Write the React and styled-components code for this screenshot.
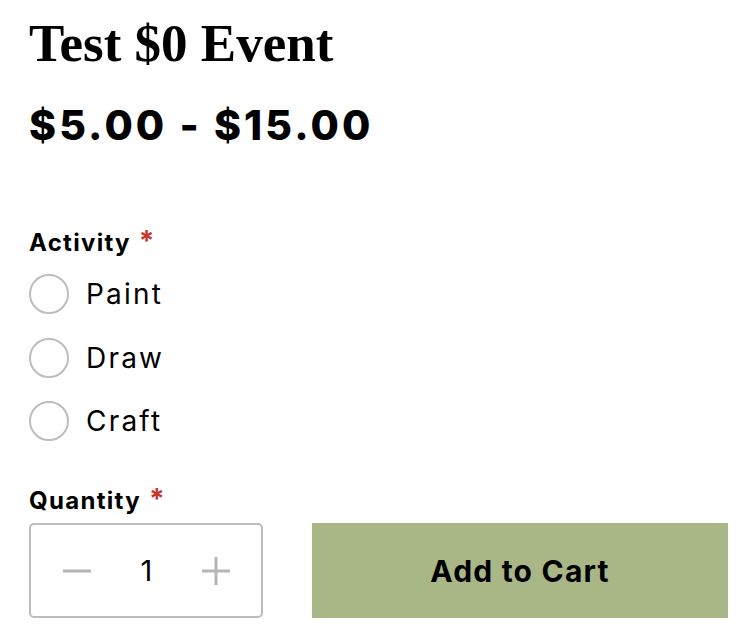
import React, { useState } from 'react'
import styled, { createGlobalStyle } from 'styled-components'

const GlobalStyle = createGlobalStyle`
  body {
    margin: 0;
    background: #ffffff;
    color: #000000;
    font-family: Inter, "Liberation Sans", sans-serif;
  }
`

const Page = styled.div`
  padding: 12px 20px 0 29px;
  width: 748px;
  box-sizing: border-box;
`

const Title = styled.h1`
  margin: 0;
  font-family: "Liberation Serif", serif;
  font-weight: 700;
  font-size: 53px;
  line-height: 62px;
`

const Price = styled.div`
  margin-top: 27px;
  font-size: 41px;
  font-weight: 800;
  line-height: 48px;
  letter-spacing: 3.1px;
`

const Field = styled.fieldset`
  margin: ${(p) => p.$top}px 0 0;
  padding: 0;
  border: 0;
`

const Label = styled.div`
  font-size: 24px;
  font-weight: 700;
  line-height: 28px;
  letter-spacing: 1.3px;

  span {
    color: #c8332b;
    margin-left: 8px;
    font-size: 28px;
  }
`

const Options = styled.div`
  display: flex;
  flex-direction: column;
  gap: 23.5px;
  margin-top: 17px;
`

const Option = styled.label`
  display: flex;
  align-items: center;
  gap: 17px;
  font-size: 28px;
  letter-spacing: 2.2px;
  cursor: pointer;
`

const Radio = styled.span`
  width: 40px;
  height: 40px;
  box-sizing: border-box;
  border-radius: 50%;
  border: 2px solid ${(p) => (p.$checked ? '#a9b787' : '#bdbdbd')};
  background: ${(p) => (p.$checked ? 'radial-gradient(#a9b787 40%, #fff 45%)' : '#fff')};
`

const BuyRow = styled.div`
  display: flex;
  gap: 49px;
  margin-top: 8px;
`

const Stepper = styled.div`
  width: 234px;
  height: 95px;
  box-sizing: border-box;
  padding: 0 30px 0 31px;
  border: 2px solid #bdbdbd;
  border-radius: 5px;
  display: flex;
  align-items: center;
  justify-content: space-between;
`

const StepButton = styled.button`
  border: 0;
  background: none;
  padding: 0;
  width: 30px;
  height: 30px;
  cursor: pointer;
`

const Count = styled.span`
  font-size: 29px;
`

const CartButton = styled.button`
  flex: 1;
  height: 95px;
  border: 0;
  background: #a9b787;
  font-family: Inter, "Liberation Sans", sans-serif;
  font-size: 30px;
  font-weight: 700;
  letter-spacing: 1.2px;
  color: #000;
  cursor: pointer;
`

const Minus = () => (
  <svg width="30" height="30" viewBox="0 0 30 30">
    <path d="M1 15h28" stroke="#b5b5b5" strokeWidth="3" />
  </svg>
)

const Plus = () => (
  <svg width="30" height="30" viewBox="0 0 30 30">
    <path d="M1 15h28M15 1v28" stroke="#b5b5b5" strokeWidth="3" />
  </svg>
)

const activities = ['Paint', 'Draw', 'Craft']

export default function App() {
  const [activity, setActivity] = useState(null)
  const [qty, setQty] = useState(1)

  return (
    <Page>
      <GlobalStyle />
      <Title>Test $0 Event</Title>
      <Price>$5.00 - $15.00</Price>

      <Field $top={78}>
        <Label>Activity<span>*</span></Label>
        <Options>
          {activities.map((a) => (
            <Option key={a} onClick={() => setActivity(a)}>
              <Radio $checked={activity === a} />
              {a}
            </Option>
          ))}
        </Options>
      </Field>

      <Field $top={44}>
        <Label>Quantity<span>*</span></Label>
        <BuyRow>
          <Stepper>
            <StepButton aria-label="Decrease" onClick={() => setQty(Math.max(1, qty - 1))}>
              <Minus />
            </StepButton>
            <Count>{qty}</Count>
            <StepButton aria-label="Increase" onClick={() => setQty(qty + 1)}>
              <Plus />
            </StepButton>
          </Stepper>
          <CartButton>Add to Cart</CartButton>
        </BuyRow>
      </Field>
    </Page>
  )
}
